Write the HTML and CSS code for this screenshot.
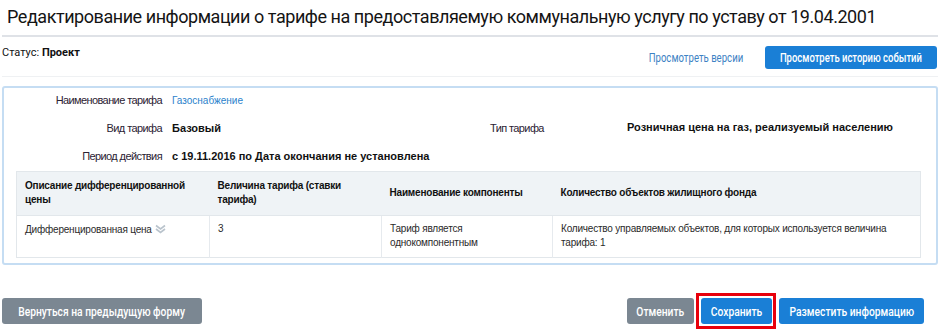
FILE: index.html
```html
<!DOCTYPE html>
<html lang="ru">
<head>
<meta charset="utf-8">
<title>Редактирование информации о тарифе</title>
<link rel="stylesheet" href="styles.css">
</head>
<body>
<div class="page">
  <h1 class="title">Редактирование информации о тарифе на предоставляемую коммунальную услугу по уставу от 19.04.2001</h1>

  <div class="status-row">
    <div class="status">Статус: <b>Проект</b></div>
    <div class="status-actions">
      <a class="link-btn" href="#"><span>Просмотреть версии</span></a>
      <button class="btn btn-blue btn-top"><span>Просмотреть историю событий</span></button>
    </div>
  </div>

  <div class="panel">
    <div class="fields">
      <div class="f-label">Наименование тарифа</div>
      <div class="f-value f-link span3"><a href="#">Газоснабжение</a></div>

      <div class="f-label">Вид тарифа</div>
      <div class="f-value f-bold">Базовый</div>
      <div class="f-label2">Тип тарифа</div>
      <div class="f-value f-bold f-up">Розничная цена на газ, реализуемый населению</div>

      <div class="f-label">Период действия</div>
      <div class="f-value f-bold span3">с 19.11.2016 по Дата окончания не установлена</div>
    </div>

    <table class="grid">
      <colgroup>
        <col class="c1"><col class="c2"><col class="c3"><col class="c4">
      </colgroup>
      <thead>
        <tr>
          <th>Описание дифференцированной цены</th>
          <th>Величина тарифа (ставки тарифа)</th>
          <th>Наименование компоненты</th>
          <th>Количество объектов жилищного фонда</th>
        </tr>
      </thead>
      <tbody>
        <tr>
          <td class="diff">Дифференцированная цена <svg class="chev" width="11" height="10" viewBox="0 0 11 10"><path d="M1 1.5 L5.5 5 L10 1.5 M1 5 L5.5 8.5 L10 5" fill="none" stroke="#b9c3cc" stroke-width="1.6"/></svg></td>
          <td>3</td>
          <td>Тариф является однокомпонентным</td>
          <td>Количество управляемых объектов, для которых используется величина тарифа: 1</td>
        </tr>
      </tbody>
    </table>
  </div>

  <div class="footer">
    <button class="btn btn-gray btn-back"><span>Вернуться на предыдущую форму</span></button>
    <div class="footer-right">
      <button class="btn btn-gray btn-cancel"><span>Отменить</span></button>
      <span class="highlight"><button class="btn btn-blue btn-save"><span>Сохранить</span></button></span>
      <button class="btn btn-blue btn-post"><span>Разместить информацию</span></button>
    </div>
  </div>
</div>
</body>
</html>
```

FILE: styles.css
```css
* { box-sizing: border-box; }
html, body { margin: 0; padding: 0; background: #fff; }
body { font-family: Roboto, "Liberation Sans", Arial, sans-serif; color: #1d1d1d; }

.page { padding: 0 9px 0 2px; }

.title {
  margin: 0;
  padding: 5px 0 6px 5px;
  font-family: Roboto, "Liberation Sans", sans-serif;
  font-size: 18px;
  letter-spacing: -0.45px;
  line-height: 24px;
  font-weight: 400;
  color: #141414;
  border-bottom: 2px solid #dfe2e7;
  white-space: nowrap;
}

.status-row {
  display: flex;
  justify-content: space-between;
  align-items: flex-start;
  padding: 9px 0 7px 0;
  border-bottom: 1px solid #eff1f3;
}
.status { font-size: 11px; line-height: 14px; color: #111; }
.status b { font-weight: 700; }

.status-actions { display: flex; align-items: center; gap: 22px; padding-right: 1px; }
.link-btn {
  font-family: Roboto, sans-serif;
  font-size: 12px;
  color: #3d82c4;
  text-decoration: none;
}
.link-btn span { display: inline-block; transform: scaleX(0.8); transform-origin: right center; }

.btn {
  display: inline-flex;
  align-items: center;
  justify-content: center;
  font-family: Roboto, sans-serif;
  font-weight: 500;
  color: #fff;
  border: 0;
  border-radius: 3px;
  padding: 0;
  cursor: pointer;
  white-space: nowrap;
  overflow: visible;
}
.btn span { display: inline-block; flex: none; transform: scaleX(0.79); }
.btn-blue { background: #1a7fd6; }
.btn-gray { background: #7b8792; }
.btn-top { height: 23px; font-size: 12px; width: 172px; }

.panel {
  margin-top: 9px;
  border: 2px solid #c5ddf3;
  border-radius: 3px;
  padding: 2px 15px 5px 12px;
}

.fields {
  display: grid;
  grid-template-columns: 168px 318px 137px 1fr;
  grid-auto-rows: 20px;
  row-gap: 8px;
  align-items: center;
  margin-left: -12px;
  font-family: "Liberation Sans", Arial, sans-serif;
}
.f-label {
  text-align: right;
  padding-right: 10px;
  font-size: 11px;
  color: #2b2233;
  letter-spacing: -0.6px;
}
.f-label2 { font-size: 11px; color: #2b2233; letter-spacing: -0.6px; }
.f-value { font-size: 11px; color: #111; }
.f-bold { font-weight: 700; }
.f-up { margin-top: -3px; }
.f-link a { font-size: 10px; color: #2a82cc; text-decoration: none; font-family: "Liberation Sans", Arial, sans-serif; }
.span3 { grid-column: 2 / 5; }

.grid {
  width: 100%;
  margin-top: 5px;
  border-collapse: collapse;
  table-layout: fixed;
  font-family: "Liberation Sans", Arial, sans-serif;
  font-size: 10px;
  letter-spacing: -0.2px;
  border: 1px solid #e2e7eb;
}
.c1 { width: 193px; }
.c2 { width: 172px; }
.c3 { width: 171px; }
.grid th {
  background: #eff3f6;
  text-align: left;
  font-weight: 700;
  font-size: 10px;
  line-height: 14px;
  color: #111;
  padding: 6px 8px 7px;
  height: 44px;
  vertical-align: middle;
  border-bottom: 1px solid #e2e7eb;
}
.grid td {
  padding: 6px 8px 6px;
  line-height: 14px;
  vertical-align: top;
  color: #2a2a2a;
  border-left: 1px solid #e6eaee;
  height: 42px;
}
.grid td:first-child { border-left: 0; }
.grid td.diff { padding-top: 7px; }
.chev { vertical-align: -1px; margin-left: 1px; }

.footer {
  display: flex;
  justify-content: space-between;
  align-items: center;
  margin-top: 28px;
  padding-right: 14px;
}
.footer .btn { height: 26px; font-size: 13px; }
.btn-back { width: 200px; }
.footer-right { display: flex; align-items: center; }
.btn-cancel { width: 67px; margin-right: 2px; }
.highlight { display: flex; border: 3px solid #e8000b; padding: 2px 1px 2px 2px; margin-right: 3px; }
.btn-save { width: 71px; }
.btn-post { width: 145px; }
```
